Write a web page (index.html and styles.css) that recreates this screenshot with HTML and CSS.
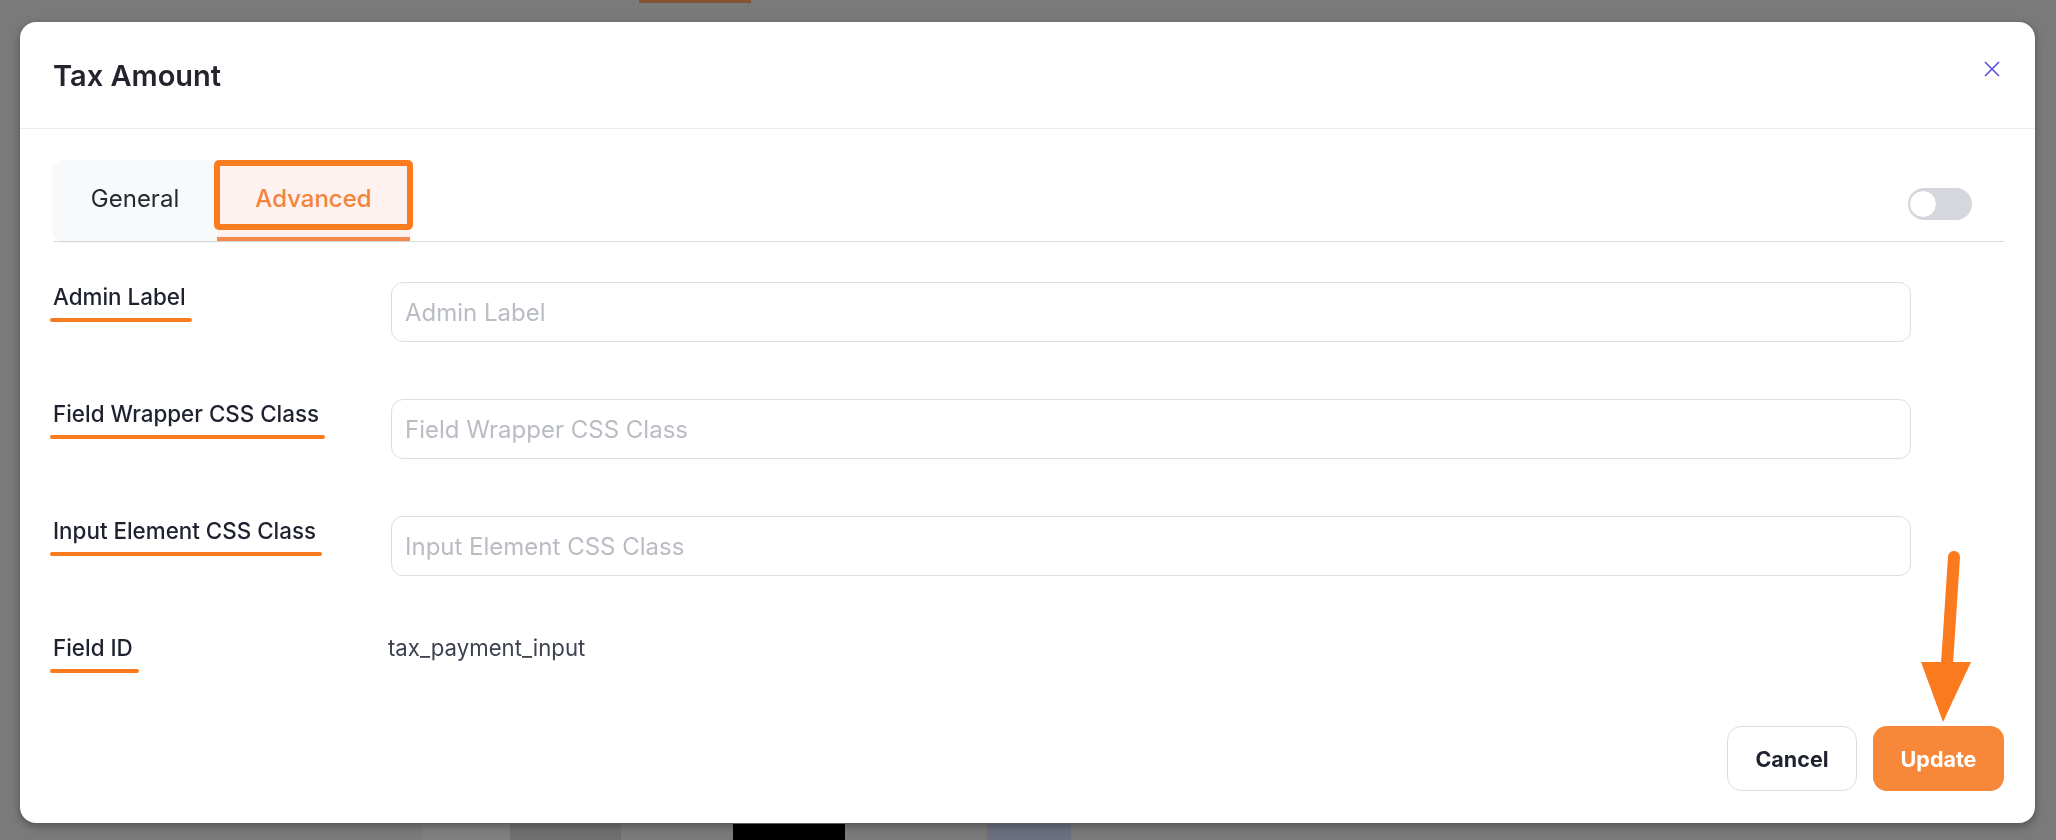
FILE: index.html
```html
<!DOCTYPE html>
<html lang="en">
<head>
    <meta charset="UTF-8">
    <meta name="viewport" content="width=device-width, initial-scale=1.0">
    <title>Tax Amount</title>
    <link rel="stylesheet" href="styles.css">
</head>
<body>
    <div class="page">
        <div class="page-top">
            <div class="page-tab"></div>
        </div>
        <div class="page-bottom">
            <div class="thumb thumb-light"></div>
            <div class="thumb thumb-grey"></div>
            <div class="thumb thumb-dark"></div>
            <div class="thumb thumb-blue"></div>
        </div>
    </div>

    <div class="overlay">
        <div class="modal">
            <header class="modal-header">
                <h2 class="modal-title">Tax Amount</h2>
                <button class="close-btn" aria-label="Close">
                    <svg width="16" height="16" viewBox="0 0 16 16">
                        <path d="M1 1 L15 15 M15 1 L1 15" stroke="#5e50d8" stroke-width="1.6" fill="none"/>
                    </svg>
                </button>
            </header>

            <div class="modal-body">
                <div class="tabs">
                    <div class="tab-group">
                        <div class="tab">General</div>
                        <div class="tab active">
                            Advanced
                            <span class="tab-mark"></span>
                        </div>
                    </div>
                    <div class="toggle"><span class="knob"></span></div>
                </div>

                <div class="fields">
                    <div class="field-label">
                        <span>Admin Label</span>
                        <span class="mark"></span>
                    </div>
                    <input class="field-input" type="text" placeholder="Admin Label">

                    <div class="field-label">
                        <span>Field Wrapper CSS Class</span>
                        <span class="mark"></span>
                    </div>
                    <input class="field-input" type="text" placeholder="Field Wrapper CSS Class">

                    <div class="field-label">
                        <span>Input Element CSS Class</span>
                        <span class="mark"></span>
                    </div>
                    <input class="field-input" type="text" placeholder="Input Element CSS Class">

                    <div class="field-label">
                        <span>Field ID</span>
                        <span class="mark"></span>
                    </div>
                    <div class="field-value">tax_payment_input</div>
                </div>

                <div class="modal-footer">
                    <button class="btn btn-cancel">Cancel</button>
                    <button class="btn btn-update">Update</button>
                </div>
            </div>

            <!-- annotation arrow pointing at Update -->
            <svg class="arrow" width="64" height="180" viewBox="0 0 64 180">
                <line x1="39" y1="7" x2="32" y2="114" stroke="#fb7a1e" stroke-width="12" stroke-linecap="round"/>
                <polygon points="6,112 56,112 28,172" fill="#fb7a1e"/>
            </svg>
        </div>
    </div>
</body>
</html>
```

FILE: styles.css
```css
body {
    font-family: Inter, "Noto Sans", sans-serif;
    background-color: #7a7a7a;
    margin: 0;
    padding: 0;
    width: 2056px;
    height: 840px;
    overflow: hidden;
}

/* page behind the overlay */
.page {
    display: flex;
    flex-direction: column;
    justify-content: space-between;
    height: 840px;
}

.page-top {
    display: flex;
    height: 3px;
}

.page-tab {
    margin-left: 639px;
    width: 112px;
    background-color: #84532f;
}

.page-bottom {
    display: flex;
    height: 16px;
}

.thumb {
    height: 100%;
}

.thumb-light {
    margin-left: 422px;
    width: 88px;
    background-color: #7f7f7f;
}

.thumb-grey {
    width: 111px;
    background-color: #6f6f6f;
}

.thumb-dark {
    margin-left: 112px;
    width: 112px;
    background-color: #000;
}

.thumb-blue {
    margin-left: 142px;
    width: 84px;
    background-color: #6b6f7f;
}

/* modal */
.overlay {
    position: fixed;
    inset: 0;
    display: flex;
    padding: 22px 21px 17px 20px;
}

.modal {
    position: relative;
    flex: 1;
    display: flex;
    flex-direction: column;
    background-color: #fff;
    border-radius: 16px;
    box-shadow: 0 3px 8px rgba(0, 0, 0, 0.35);
}

.modal-header {
    display: flex;
    align-items: center;
    justify-content: space-between;
    height: 106px;
    padding: 0 35px 0 33px;
    border-bottom: 1px solid #ececec;
}

.modal-title {
    margin: 0;
    font-size: 29px;
    font-weight: 600;
    color: #24242f;
}

.close-btn {
    background: none;
    border: none;
    padding: 0;
    margin-bottom: 12px;
    display: flex;
    cursor: pointer;
}

.modal-body {
    flex: 1;
    display: flex;
    flex-direction: column;
    padding: 31px 31px 32px 33px;
}

/* tabs */
.tabs {
    display: flex;
    height: 81px;
    border-bottom: 1px solid #dcdcdc;
}

.tab-group {
    display: flex;
    background-color: #f8f9fa;
    border-radius: 12px 12px 0 12px;
    box-shadow: 0 1px 3px rgba(0, 0, 0, 0.06);
}

.tab {
    position: relative;
    display: flex;
    align-items: center;
    justify-content: center;
    width: 164px;
    font-size: 24px;
    color: #262833;
    padding-bottom: 4px;
}

.tab.active {
    width: 193px;
    color: #f4843c;
    font-weight: 500;
    background-color: #fdf2ef;
    border-bottom: 4px solid #f68a4c;
    padding-bottom: 0;
}

.tab-mark {
    position: absolute;
    left: -3px;
    top: 0;
    width: 199px;
    height: 70px;
    box-sizing: border-box;
    border: 6px solid #fb7c1e;
    border-radius: 5px;
}

.toggle {
    position: relative;
    align-self: center;
    margin: 6px 32px 0 auto;
    width: 64px;
    height: 32px;
    border-radius: 16px;
    background-color: #d5d7dc;
}

.knob {
    position: absolute;
    left: 1px;
    top: 2px;
    width: 26px;
    height: 26px;
    border-radius: 50%;
    background-color: #fff;
    border: 1px solid #cfd1d6;
}

/* fields */
.fields {
    display: grid;
    grid-template-columns: 338px 1520px;
    row-gap: 57px;
    align-items: start;
    margin-top: 40px;
}

.field-label {
    display: inline-flex;
    flex-direction: column;
    align-items: flex-start;
    justify-self: start;
    padding-top: 1px;
    font-size: 22.4px;
    line-height: 28px;
    font-weight: 500;
    color: #1e2130;
}

.mark {
    align-self: stretch;
    height: 4px;
    margin: 7px -6px 0 -3px;
    border-radius: 2px;
    background-color: #f97a1f;
}

.field-input {
    box-sizing: border-box;
    width: 100%;
    height: 60px;
    padding: 0 13px;
    border: 1px solid #dedede;
    border-radius: 12px;
    font-family: Inter, "Noto Sans", sans-serif;
    font-size: 24px;
    color: #333;
    outline: none;
}

.field-input::placeholder {
    color: #b9bcc3;
}

.field-value {
    margin-left: -3px;
    padding-top: 1px;
    font-size: 22.2px;
    line-height: 28px;
    color: #3d4250;
}

/* footer */
.modal-footer {
    margin-top: auto;
    display: flex;
    justify-content: flex-end;
    gap: 16px;
}

.btn {
    height: 65px;
    border-radius: 14px;
    font-family: Inter, "Noto Sans", sans-serif;
    font-size: 21.5px;
    font-weight: 700;
    cursor: pointer;
}

.btn-cancel {
    width: 130px;
    background-color: #fff;
    border: 1px solid #dcdcdc;
    color: #1f2330;
}

.btn-update {
    width: 131px;
    background-color: #f7883a;
    border: none;
    color: #fff;
}

.arrow {
    position: absolute;
    left: 1895px;
    top: 528px;
}
```
